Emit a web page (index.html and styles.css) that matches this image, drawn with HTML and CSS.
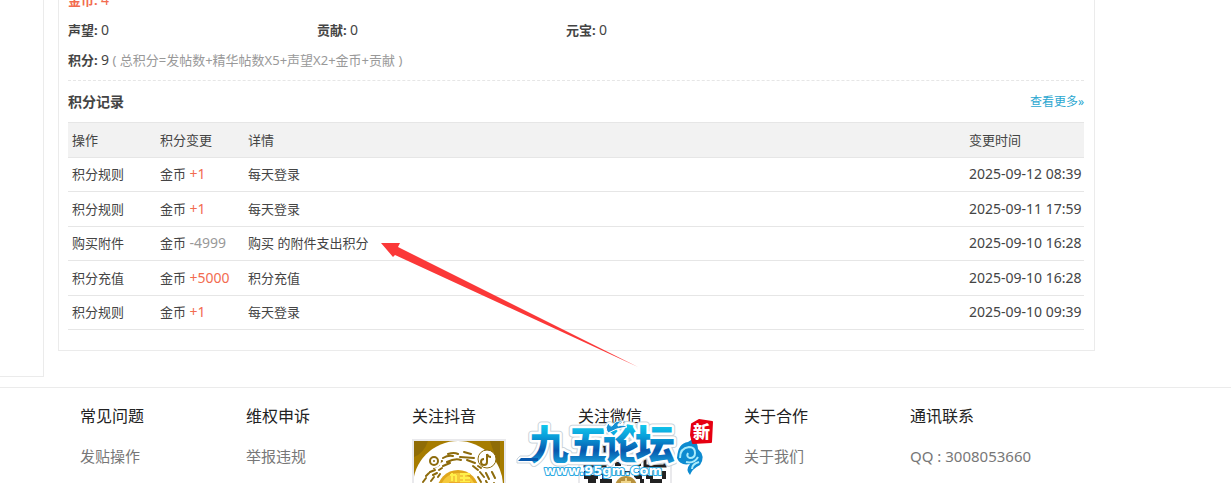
FILE: index.html
```
<!DOCTYPE html>
<html lang="zh-CN">

<head>
    <meta charset="UTF-8">
    <meta name="viewport" content="width=device-width, initial-scale=1.0">
    <title>我的积分</title>
    <link rel="stylesheet" href="styles.css">
</head>

<body>
    <div class="wrap">
        <aside class="side"></aside>
        <main class="panel">
            <ul class="credits">
                <li class="wide hot"><em>金币:</em> <span class="num">4</span></li>
                <li><em>声望:</em> <span class="num">0</span></li>
                <li><em>贡献:</em> <span class="num">0</span></li>
                <li><em>元宝:</em> <span class="num">0</span></li>
                <li class="wide"><em>积分:</em> <span class="num">9</span> <span class="tip">( 总积分=发帖数+精华帖数X5+声望X2+金币+贡献 )</span></li>
            </ul>
            <div class="title">
                <h2>积分记录</h2>
                <a href="#">查看更多»</a>
            </div>
            <table class="log">
                <tr>
                    <th class="op">操作</th>
                    <th class="change">积分变更</th>
                    <th>详情</th>
                    <th class="time">变更时间</th>
                </tr>
                <tr>
                    <td><a href="#">积分规则</a></td>
                    <td>金币 <span class="num plus">+1</span></td>
                    <td>每天登录</td>
                    <td class="num">2025-09-12 08:39</td>
                </tr>
                <tr>
                    <td><a href="#">积分规则</a></td>
                    <td>金币 <span class="num plus">+1</span></td>
                    <td>每天登录</td>
                    <td class="num">2025-09-11 17:59</td>
                </tr>
                <tr>
                    <td><a href="#">购买附件</a></td>
                    <td>金币 <span class="num minus">-4999</span></td>
                    <td><a href="#">购买 的附件支出积分</a></td>
                    <td class="num">2025-09-10 16:28</td>
                </tr>
                <tr>
                    <td><a href="#">积分充值</a></td>
                    <td>金币 <span class="num plus">+5000</span></td>
                    <td>积分充值</td>
                    <td class="num">2025-09-10 16:28</td>
                </tr>
                <tr>
                    <td><a href="#">积分规则</a></td>
                    <td>金币 <span class="num plus">+1</span></td>
                    <td>每天登录</td>
                    <td class="num">2025-09-10 09:39</td>
                </tr>
            </table>
            <svg class="arrow" width="258" height="124" viewBox="0 0 258 124">
                <path fill="#fb3838" d="M0 0H19L17 4L257 124L14 12L12 14Z" />
            </svg>
        </main>
    </div>

    <footer class="footer">
        <dl>
            <dt>常见问题</dt>
            <dd><a href="#">发贴操作</a></dd>
        </dl>
        <dl>
            <dt>维权申诉</dt>
            <dd><a href="#">举报违规</a></dd>
        </dl>
        <dl>
            <dt>关注抖音</dt>
            <dd class="code">
                <svg width="90" height="90" viewBox="0 0 90 90">
                    <rect width="90" height="90" fill="#a67c00" />
                    <path d="M0 0h14q-4 12-14 16zM76 0h10v30z" fill="#8f6c06" />
                    <circle cx="44" cy="45" r="45" fill="#fff" />
                    <g fill="none" stroke="#8d6b0c" stroke-width="2" stroke-linecap="round">
                        <path d="M34 13q6-2 10 0M50 11l7 2M29 17q5-3 10-2M46 16l14 1M24 22l4-2M33 21q8-4 14-2M53 19l8 3M64 25l3 2M20 27l5-3M29 25l7-3M16 31l5-2M25 29l3-2M59 25l5 4M72 32l3 6M12 35l3-3M19 34l4-2M66 31l4 5M78 31l3 6M9 41l3-4M17 40l3-4M24 36l2-3M64 36l3 5M72 40l2 4M80 42v3" />
                    </g>
                    <circle cx="44" cy="50" r="21" fill="#e0a71c" />
                    <circle cx="44" cy="50" r="18" fill="#f5c93a" />
                    <path d="M36 34h6M38 32v8M42 34v7M46 33h10M46 37h10M46 41h10M50 33v8" fill="none" stroke="#fff04a" stroke-width="2" />
                    <path d="M35 42h22" stroke="#e08a1c" />
                    <circle cx="20" cy="20" r="7" fill="#fff" />
                    <circle cx="20" cy="20" r="4" fill="none" stroke="#8d6b0c" stroke-width="2" />
                    <circle cx="20" cy="20" r="1" fill="#8d6b0c" />
                    <circle cx="73" cy="18" r="9" fill="#fff" stroke="#8d6b0c" />
                    <path d="M73 13v8a3 3 0 1 1-3-3M73 13q1 3 4 3" fill="none" stroke="#8d6b0c" stroke-width="2" />
                </svg>
            </dd>
        </dl>
        <dl>
            <dt>关注微信</dt>
            <dd class="code">
                <svg width="90" height="90" viewBox="0 0 90 90">
                    <rect width="90" height="90" fill="#fff" />
                    <path d="M5 5h20v20H5zM65 5h20v20H65z" fill="none" stroke="#222" stroke-width="3" />
                    <path d="M10 10h10v10H10zM70 10h10v10H70z" fill="#222" />
                    <path d="M31 5h8M45 5h4M55 5h6M33 11h4M43 11h12M31 17h12M49 17h8M35 23h6M47 23h4M57 23h4M4 32h6M16 32h10M32 32h4M40 32h10M58 32h5M69 32h4M78 32h8M4 36h14M22 36h4M54 36h8M66 36h7M82 36h4M8 40h8M20 40h12M60 40h4M70 40h12"
                        stroke="#222" stroke-width="4" />
                    <circle cx="46" cy="46" r="13" fill="#fff" />
                    <circle cx="46" cy="46" r="11" fill="#b8923c" />
                    <path d="M41 41h10M46 37v7" stroke="#f0d589" stroke-width="2" />
                </svg>
            </dd>
        </dl>
        <dl>
            <dt>关于合作</dt>
            <dd><a href="#">关于我们</a></dd>
        </dl>
        <dl>
            <dt>通讯联系</dt>
            <dd>QQ : 3008053660</dd>
        </dl>
        <svg class="logo" width="204" height="72" viewBox="0 0 204 72">
            <defs>
                <linearGradient id="sea" x1="0" y1="0" x2="0" y2="1">
                    <stop offset="0.15" stop-color="#12d3f2" />
                    <stop offset="0.4" stop-color="#0aa0da" />
                    <stop offset="0.65" stop-color="#0758ad" />
                    <stop offset="0.9" stop-color="#19a9df" />
                </linearGradient>
            </defs>
            <g class="logo-name logo-edge">
                <text x="15" y="46">九</text>
                <text x="54" y="46">五</text>
                <text x="89" y="46">论</text>
                <text x="121" y="46">坛</text>
            </g>
            <path d="M3 46L6 43H22V50H3Z" fill="#fff" stroke="#c9d3da" />
            <g class="logo-name">
                <text x="15" y="46">九</text>
                <text x="54" y="46">五</text>
                <text x="89" y="46">论</text>
                <text x="121" y="46">坛</text>
            </g>
            <path d="M4 48L7 45H24V48Z" fill="#0758ad" />
            <!-- spray above the third character -->
            <path d="M94 20Q90 14 95 10Q96 15 99 12Q101 7 110 8Q103 10 104 13Q110 11 113 14Q102 15 94 20Z" fill="#1590d4" stroke="#fff" />
            <!-- wave -->
            <path d="M163 45Q164 30 174 29Q178 27 179 24Q184 31 184 36Q192 43 186 52Q178 56 176 62Q171 57 176 51Q166 53 163 45Z"
                fill="#0d8bd0" stroke="#fff" stroke-width="5" paint-order="stroke" stroke-linejoin="round" />
            <path d="M166 45Q166 35 175 34Q181 34 181 40Q181 45 176 45Q172 44 174 40M172 49Q180 51 184 44M178 56Q178 51 185 49"
                fill="none" stroke="#a9ebfb" stroke-width="2" />
            <!-- seal -->
            <path d="M178 11L185 7L198 9L197 29L179 30L177 22Z" fill="#e60012" stroke="#e60012" stroke-width="2" stroke-linejoin="round" />
            <text class="logo-seal" x="179" y="25">新</text>
            <text class="logo-url" x="30" y="62">www.95gm.Com</text>
        </svg>
    </footer>
</body>

</html>
```
FILE: styles.css
```
html,
body {
    margin: 0;
    height: 100%;
    overflow: hidden;
}

body {
    background: #fff;
    color: #444;
    font: 13px/30px "Noto Sans", "Noto Sans CJK SC", sans-serif;
}

ul,
dl,
dd {
    margin: 0;
    padding: 0;
    list-style: none;
}

a {
    color: inherit;
    text-decoration: none;
}

.wrap {
    display: flex;
    align-items: flex-start;
    gap: 14px;
    margin-top: -15px;
    padding-right: 136px;
}

.side {
    box-sizing: border-box;
    width: 44px;
    height: 392px;
    border: solid #ebebeb;
    border-width: 0 1px 1px 0;
}

.panel {
    position: relative;
    flex: 1;
    padding: 0 10px 20px 9px;
    border: 1px solid #ebebeb;
    border-top: 0;
}

.credits {
    display: flex;
    flex-wrap: wrap;
    padding-bottom: 5px;
    border-bottom: 1px dashed #e6e6e6;
}

.credits li {
    width: 249px;
    height: 30px;
}

.credits .wide {
    width: 100%;
}

.credits em {
    font-style: normal;
    font-weight: bold;
}

.credits .hot,
.plus {
    color: #f26c4f;
}

.tip,
.minus {
    color: #999;
}

.title {
    display: flex;
    justify-content: space-between;
    height: 41px;
    line-height: 41px;
}

.title h2 {
    margin: 0;
    font-size: 14px;
}

.title a {
    color: #2ba7d0;
    font-size: 12px;
}

.log {
    width: 100%;
    height: 208px;
    border-collapse: collapse;
    table-layout: fixed;
    line-height: 20px;
}

.log th {
    background: #f2f2f2;
    border-top: 1px solid #e6e6e6;
    font-weight: normal;
    text-align: left;
}

.log th,
.log td {
    padding: 6px 0 6px 4px;
    border-bottom: 1px solid #e6e6e6;
}

.log .op,
.log .change {
    width: 84px;
}

.log .time {
    width: 115px;
}

.num {
    font-size: 14px;
}

.arrow {
    position: absolute;
    left: 322px;
    top: 258px;
}

.footer {
    position: relative;
    display: grid;
    grid-template-columns: repeat(6, 166px);
    margin-top: 10px;
    padding: 13px 0 0 80px;
    border-top: 1px solid #ebebeb;
    color: #777;
    font-size: 15px;
}

.footer dt {
    color: #222;
    font-size: 16px;
}

.footer dd {
    padding-top: 10px;
}

.footer .code {
    padding-top: 8px;
}

.code svg {
    display: block;
    border: 2px solid #e9e9ec;
}

.logo {
    position: absolute;
    left: 514px;
    top: 25px;
}

.logo-name {
    font: 900 40px "Noto Sans CJK SC", sans-serif;
    fill: url(#sea);
    stroke: #fff;
    stroke-width: 5px;
    stroke-linejoin: round;
    paint-order: stroke;
}

.logo-edge {
    stroke: #c9d3da;
    stroke-width: 7px;
}

.logo-url {
    font: bold 13px "DejaVu Sans", sans-serif;
    fill: #fff;
    stroke: #2ba9e2;
    stroke-width: 2px;
    stroke-linejoin: round;
    paint-order: stroke;
}

.logo-seal {
    font: 900 17px "Noto Sans CJK SC", sans-serif;
    fill: #fff;
}
```
